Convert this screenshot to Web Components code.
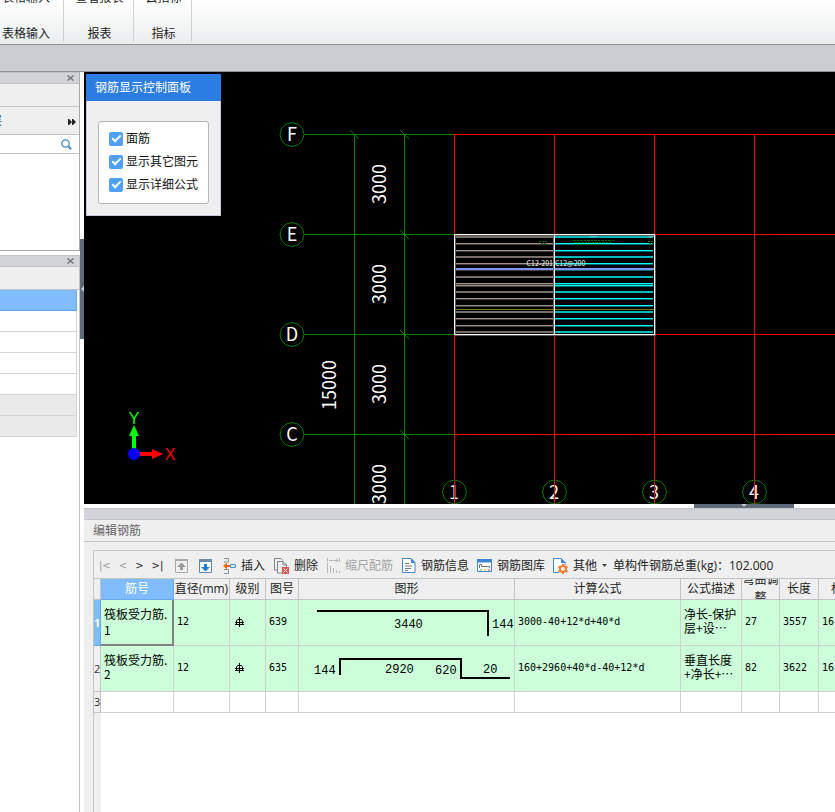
<!DOCTYPE html>
<html lang="zh-CN">
<head>
<meta charset="utf-8">
<title>编辑钢筋</title>
<style>
html,body{height:100%}
body{margin:0;background:#fff;overflow:hidden;color:#1e1e1e;font:12px/16px "Open Sans","Noto Sans CJK SC",sans-serif}
</style>
</head>
<body>
<rebar-app></rebar-app>
<script>
const define=(name,html,after)=>{
  const t=document.createElement('template');
  t.innerHTML=html;
  customElements.define(name,class extends HTMLElement{
    constructor(){super();this.attachShadow({mode:'open'}).append(t.content.cloneNode(true));}
    connectedCallback(){if(after)after(this,this.shadowRoot);}
  });
};
const reset=`:host,*{box-sizing:border-box}button{all:unset;box-sizing:border-box;cursor:default;white-space:nowrap}`;

define('ribbon-group',`<style>${reset}
:host{display:flex;justify-content:center;padding-left:2px;border-right:1px solid #cdcfd1;height:42px;white-space:nowrap;overflow:hidden}
div{display:flex;flex-direction:column;align-items:center;justify-content:flex-end;gap:20px}
button{height:16px}
</style><div><button><slot name="top"></slot></button><button><slot></slot></button></div>`);

define('ribbon-bar',`<style>${reset}
:host{display:block}
nav{display:flex;height:45px;background:linear-gradient(#fff,#eaedee);border-bottom:1px solid #8c9196}
ribbon-group:first-child{width:64px;justify-content:flex-end;padding-right:13px}
ribbon-group:nth-child(2){width:70px}
ribbon-group:nth-child(3){width:58px}
.band{height:27px;background:#c9ccd1;border-bottom:1px solid #8c9196}
</style><nav>
<ribbon-group><span slot="top">表格输入</span>表格输入</ribbon-group>
<ribbon-group><span slot="top">查看报表</span>报表</ribbon-group>
<ribbon-group><span slot="top">云指标</span>指标</ribbon-group>
</nav><div class="band"></div>`);

define('dock-title',`<style>${reset}
:host{display:flex;justify-content:flex-end;align-items:center;height:12px;padding-right:5px;background:#d3d4d9;border:solid #c2c3c7;border-width:1px 0}
button{width:7px;height:10px;display:flex;align-items:center}
</style><button aria-label="关闭"><svg width="7" height="6" viewBox="0 0 7 6" stroke="#777" stroke-width="1.5"><path d="M.5.5l6 5M6.5.5l-6 5"/></svg></button>`);

define('component-list',`<style>${reset}
:host{display:flex;flex-direction:column;height:179px;border:solid #aaa;border-width:0 1px 1px 0}
.tabs{height:23px;background:#efefef;border-bottom:1px solid #c2c3c7}
.tools{height:28px;display:flex;align-items:center;justify-content:space-between;background:#efefef;border-bottom:1px solid #c2c3c7;padding-right:3px}
.tools .cut{width:2px;overflow:hidden;direction:rtl;color:#245}
.search{display:flex;align-items:center;height:19px;border-bottom:1px solid #c2c3c7;padding-right:7px}
input{flex:1;min-width:0;border:0;outline:0;padding:0;background:none}
</style><dock-title></dock-title><div class="tabs"></div>
<div class="tools"><button class="cut">复制到其它楼层</button><button aria-label="更多"><svg width="8" height="6" viewBox="0 0 8 6" fill="#222"><path d="M0 0h1l3 3-3 3H0zM4 0h1l3 3-3 3H4z"/></svg></button></div>
<div class="search"><input aria-label="搜索构件"><svg width="11" height="11" viewBox="0 0 11 11" fill="none" stroke="#3b93c9"><circle cx="4.5" cy="4.5" r="3.7" stroke-width="1.3"/><path d="M7.2 7.2l3 3" stroke-width="2"/></svg></div>`);

define('property-list',`<style>${reset}
:host{display:flex;flex-direction:column;flex:1;border-right:1px solid #c2c3c7}
.tabs{height:23px;background:#efefef;border-bottom:1px solid #c2c3c7}
ul{margin:0 2px 0 0;padding:0;list-style:none}
li{height:21px;border:solid #d4d4d4;border-width:0 1px 1px 0}
.sel{background:#80bbfb;border-color:#66a8ee}
.off{background:#eaeaea}
</style><dock-title></dock-title><div class="tabs"></div>
<ul><li class="sel"></li><li></li><li></li><li></li><li></li><li class="off"></li><li class="off"></li></ul>`);

define('check-row',`<style>
:host{display:block}
label{display:flex;align-items:center;gap:3px;height:23px;color:#111}
input{appearance:none;margin:0;width:14px;height:14px;border-radius:2px;background:#50a0f8;display:grid;place-items:center}
input:checked::before{content:"";width:9px;height:5px;box-sizing:border-box;border:solid #fff;border-width:0 0 2px 2px;transform:translateY(-1px) rotate(-45deg)}
</style><label><input type="checkbox" checked><span><slot></slot></span></label>`);

define('display-panel',`<style>${reset}
:host{display:block;width:135px;background:#efefef;border:1px solid #c5cad6;border-top:0}
h2{margin:0 -1px;height:27px;padding:5px 9px;background:#2b7de1;color:#fff;font:inherit;line-height:17px}
.box{margin:20px 11px 11px;padding:5px 10px 7px;border:1px solid #b4b4b4;border-radius:3px;background:#fff}
</style><h2>钢筋显示控制面板</h2><div class="box"><check-row>面筋</check-row><check-row>显示其它图元</check-row><check-row>显示详细公式</check-row></div>`);

define('plan-view',`<style>
:host{display:block;position:relative;background:#000;overflow:hidden}
svg{display:block;width:100%;height:100%}
display-panel{position:absolute;left:2px;top:2px}
text{font-family:"Noto Sans CJK SC","Noto Sans",sans-serif;font-size:18px;fill:#fff;text-anchor:middle}
.axis{font-size:16px;font-family:"Liberation Sans",sans-serif}
.tag{font-size:7px}
.green{stroke:#008000;fill:none}
.red{stroke:#f00;fill:none}
</style><svg><g transform="translate(-84,-72)"></g></svg><display-panel></display-panel>`,(host,root)=>{
  let s='';
  const ring=(x,y)=>{let p='';for(let i=0;i<12;i++){const a=i*Math.PI/6;p+=(x+12*Math.cos(a)).toFixed(1)+','+(y+12*Math.sin(a)).toFixed(1)+' ';}return `<polygon class="green" points="${p}"/>`;};
  s+='<g class="green"><path d="M354.5 134V504M404.5 134V504"/>';
  for(const y of [134,234,334,434]){
    s+=`<path d="M304 ${y+.5}H454M400 ${y-4}l9 9"/>`;
  }
  s+='<path d="M350 130l9 9"/></g>';
  s+='<g class="red"><path d="M454 134.5H2000M654 234.5H2000M654 334.5H2000M454 434.5H2000"/><path d="M454.5 134V504M554.5 134V504M654.5 134V504M754.5 134V504"/></g>';
  // slab reinforcement bars: left span, then right span
  s+='<rect x="455" y="235" width="199" height="99" fill="#000"/>';
  const bars=[[236,2],[243,1],[250,1],[256,2],[263,1],[269,1],[276,2],[283,1],[285,1],[291,2],[298,1],[305,1],[311,2],[318,1],[325,1],[331,2]];
  for(const [y,h] of bars){
    const w=h>1;
    s+=`<rect x="456" y="${y}" width="98" height="${h}" fill="${w?'#786e68':'#a0928a'}"/>`;
    s+=`<rect x="555" y="${y}" width="98" height="${h}" fill="${w?'#00b9bb':'#00ffff'}"/>`;
    if(!w)s+=`<rect x="456" y="${y+1}" width="98" height="1" fill="#443d3a"/><rect x="555" y="${y+1}" width="98" height="1" fill="#006c6c"/>`;
  }
  s+='<path d="M455 269H654" stroke="#7f92ff" stroke-width="2"/><path d="M455 309.5H654" stroke="#77770f"/>';
  s+='<g stroke="#0a640a" stroke-width="1"><path d="M539 241.5h9M541 243.5h6M648 241.5h7M649 243.5h5" stroke-dasharray="2 1"/><path d="M573 240.5h41M574 242.5h39M574 244.5h30" stroke-dasharray="3 1 2 1"/></g>';
  s+='<path d="M590 236h7M648 236h6" stroke="#ccc"/>';
  s+='<rect x="455.5" y="235.5" width="200" height="100" fill="none" stroke="#555"/><path d="M553.5 235V334" stroke="#666"/>';
  s+='<rect x="454.5" y="234.5" width="200" height="100" fill="none" stroke="#fff"/><path d="M554.5 235V334" stroke="#fff"/>';
  s+='<text class="tag" x="556" y="266">C12-201:C12@200</text>';
  [['F',134],['E',234],['D',334],['C',434]].forEach(([c,y])=>{s+=ring(292,y+.5)+`<text x="292" y="${y+7}">${c}</text>`;});
  [184,284,384,484].forEach(y=>{s+=`<text transform="translate(386,${y}) rotate(-90)">3000</text>`;});
  s+='<text transform="translate(336,385) rotate(-90)">15000</text>';
  [454,554,654,754].forEach((x,i)=>{s+=ring(x+.5,492)+`<text x="${x}" y="499">${i+1}</text><path class="red" d="M${x+.5} 480V504"/>`;});
  s+='<path d="M134 454V436" stroke="#0f0" stroke-width="4"/><path d="M134 425l5 11h-10z" fill="#0f0"/><text class="axis" x="134" y="424" style="fill:#0f0">Y</text>';
  s+='<path d="M134 454H153" stroke="#f00" stroke-width="4"/><path d="M163 454l-11-5v10z" fill="#f00"/><text class="axis" x="170" y="460" style="fill:#f00">X</text><circle cx="134" cy="454" r="6" fill="#00f"/>';
  root.querySelector('g').innerHTML=s;
});

define('tool-button',`<style>${reset}
:host{display:flex}
button{display:flex;align-items:center;gap:5px;height:18px;color:#222}
:host([off]) button{color:#a6a6a6}
</style><button><slot name="icon"></slot><slot></slot></button>`);

define('rebar-toolbar',`<style>${reset}
:host{display:flex;align-items:center;flex:none;height:28px;padding:2px 0 0 5px;border-bottom:1px solid #c2c3c7;background:#efefef;white-space:nowrap}
.nav{display:flex;gap:8px;width:76px;font-family:"DejaVu Sans",sans-serif;font-size:10px;color:#222}
.nav button:nth-child(-n+2){color:#999}
.a{margin-right:9px}.b{margin-right:11px}.c{margin-right:8px}
svg{display:block}
output{margin-left:6px;color:#222}
</style>
<div class="nav"><button aria-label="首条">|&lt;</button><button aria-label="上一条">&lt;</button><button aria-label="下一条">&gt;</button><button aria-label="末条">&gt;|</button></div>
<tool-button off class="b"><svg slot="icon" width="13" height="14" viewBox="0 0 13 14"><path d="M.5.5h12v13H.5z" fill="none" stroke="#aaa"/><path d="M0 0h13v2H0z" fill="#aaa"/><path d="M6.500 3.500l4.500 4.500H8v3H5V8H2z" fill="#999"/></svg></tool-button>
<tool-button class="b"><svg slot="icon" width="13" height="14" viewBox="0 0 13 14"><path d="M.5.5h12v13H.5z" fill="#fff" stroke="#5b85a8"/><path d="M0 0h13v3H0z" fill="#6b8da8"/><path d="M6.500 12.500l4.500-4.500H8V5H5v3H2z" fill="#1f7fd6"/></svg></tool-button>
<tool-button class="a"><svg slot="icon" width="13" height="16" viewBox="0 0 13 16" fill="none"><path d="M1 .5h4.500v3.500H1M1 11.500h4.500v4H1" stroke="#8a9299"/><path d="M0 8l4-3.500V7h3v2H4v2.500z" fill="#ea6a12"/><path d="M7.500 6.500h5v3h-5z" stroke="#4a90d9" fill="#dcecfb"/></svg>插入</tool-button>
<tool-button class="a"><svg slot="icon" width="15" height="16" viewBox="0 0 15 16" fill="none"><path d="M3 12H.5V.5H7l2 2" stroke="#7d858c"/><path d="M8 15H3.500V3.500H9L12.500 7v2" stroke="#7d858c"/><path d="M9 3.500V7h3.500" stroke="#7d858c"/><path d="M8 9h7v7H8z" fill="#d9534a"/><path d="M9.500 10.500l4 4m0-4l-4 4" stroke="#fff"/></svg>删除</tool-button>
<tool-button off class="a"><svg slot="icon" width="13" height="16" viewBox="0 0 13 16" stroke="#b5b5b5" fill="none"><path d="M.5 0v4M12.500 0v4M2 2.500h9M9 .5l2 2-2 2M.5 5v10M3.500 8v7M6.500 10v5M9.500 12v3M12.500 13v2"/></svg>缩尺配筋</tool-button>
<tool-button class="c"><svg slot="icon" width="14" height="15" viewBox="0 0 14 15" fill="none"><path d="M.5.5h8.500l4 4v10H.5z" fill="#fff" stroke="#3f86d8"/><path d="M9 0v5h4.500z" fill="#3f86d8"/><path d="M3 5.500h4M3 8h7M3 10.500h6M3 12.500h3" stroke="#6d7880"/></svg>钢筋信息</tool-button>
<tool-button class="c"><svg slot="icon" width="15" height="13" viewBox="0 0 15 13" fill="none"><path d="M.5.5h14v12H.5z" fill="#fff" stroke="#3f86d8"/><path d="M0 0h15v3.500H0z" fill="#3f86d8"/><path d="M2.500 9V5.500h2v2h8V9" stroke="#6d7880"/><path d="M3 11h2" stroke="#4b4"/><path d="M7 11h2" stroke="#e90"/><path d="M11 11h2" stroke="#e33"/></svg>钢筋图库</tool-button>
<tool-button><svg slot="icon" width="15" height="16" viewBox="0 0 15 16" fill="none"><path d="M6 14.500H.5V.5H8l4 4V7" fill="#fff" stroke="#3f86d8"/><path d="M8 0v5h4.500z" fill="#3f86d8"/><circle cx="10" cy="11" r="3" stroke="#f08030" stroke-width="2"/><path d="M10 6v2M10 14v2M5.500 8.500l2 1M12.500 12.500l2 1M5.500 13.500l2-1M12.500 9.500l2-1" stroke="#f08030" stroke-width="2"/></svg>其他<svg width="5" height="3" viewBox="0 0 5 3" fill="#444"><path d="M0 0h5L2.500 3z"/></svg></tool-button>
<output>单构件钢筋总重(kg)：102.000</output>`);

const grade='<svg width="15" height="12" viewBox="0 0 15 12" fill="none" stroke="#000" role="img" aria-label="三级钢"><path d="M6.500 1v10M3.500 8V5l1-1.500h4l1 1.500v3M2 6.500h9M2 8.500h9"/></svg>';
define('rebar-table',`<style>${reset}
:host{display:flex;flex:1;overflow:hidden;background:linear-gradient(90deg,#efefef 7px,#fff 7px)}
table{width:774px;flex:none;border-collapse:separate;border-spacing:0;table-layout:fixed;align-self:flex-start;font:10px/14px "DejaVu Sans Mono","Noto Sans CJK SC",monospace;color:#000}
th,td{padding:0;border:solid #d0d0d0;border-width:0 1px 1px 0;overflow:hidden}
thead th{height:21px;background:#efefef;border-color:#c2c3c7;font:12px/16px "Open Sans","Noto Sans CJK SC",sans-serif;color:#222;text-align:center}
thead div{height:20px;display:flex;align-items:center;justify-content:center;white-space:nowrap;overflow:hidden}
thead .wrap{white-space:normal;line-height:18px}
thead .sel,tbody .sel{background:#80bbfb;color:#fff;border-color:#66a8ee}
tbody th{background:#efefef;border-color:#c2c3c7;font:11px/16px "Open Sans",sans-serif;color:#333}
tbody th.sel{font-weight:700}
.r{height:46px}.r td{background:#ccffd9;padding:0 3px 2px}
.r td.name,.r td.desc{font-size:12px;font-family:"Noto Sans CJK SC",sans-serif;line-height:14px;padding:0 2px 3px 3px;word-break:break-all}
.r td.name{padding-right:0}
.r td.cur{border:solid #808080;border-width:0 2px 2px 0;line-height:16px;padding-bottom:0}
.r td.fig{padding:0}
.e{height:21px}
svg{display:block}
.fig text{font:12px "Liberation Mono",monospace}
</style><table><colgroup><col style="width:7px"><col style="width:73px"><col style="width:56px"><col style="width:36px"><col style="width:33px"><col style="width:216px"><col style="width:166px"><col style="width:61px"><col style="width:38px"><col style="width:39px"><col style="width:49px"></colgroup>
<thead><tr><th></th><th class="sel"><div>筋号</div></th><th><div>直径(mm)</div></th><th><div>级别</div></th><th><div>图号</div></th><th><div>图形</div></th><th><div>计算公式</div></th><th><div>公式描述</div></th><th><div class="wrap">弯曲调整</div></th><th><div>长度</div></th><th><div>根数</div></th></tr></thead>
<tbody>
<tr class="r"><th class="sel">1</th><td class="name cur">筏板受力筋.1</td><td>12</td><td>${grade}</td><td>639</td>
<td class="fig"><svg width="215" height="45"><path d="M18 11H189V36" fill="none" stroke="#000" stroke-width="2"/><text x="95" y="28">3440</text><text x="193" y="28">144</text></svg></td>
<td>3000-40+12*d+40*d</td><td class="desc">净长-保护层+设⋯</td><td>27</td><td>3557</td><td>16</td></tr>
<tr class="r"><th>2</th><td class="name">筏板受力筋.2</td><td>12</td><td>${grade}</td><td>635</td>
<td class="fig"><svg width="215" height="45"><path d="M41 29V13H162V32H211" fill="none" stroke="#000" stroke-width="2"/><text x="15" y="28">144</text><text x="86" y="27">2920</text><text x="136" y="28">620</text><text x="184" y="27">20</text></svg></td>
<td>160+2960+40*d-40+12*d</td><td class="desc">垂直长度+净长+⋯</td><td>82</td><td>3622</td><td>16</td></tr>
<tr class="e"><th>3</th><td></td><td></td><td></td><td></td><td></td><td></td><td></td><td></td><td></td><td></td></tr>
</tbody></table>`);

define('rebar-editor',`<style>${reset}
:host{display:flex;flex-direction:column;min-width:0;min-height:0;background:#efefef}
.strip{height:12px;flex:none;background:#d3d4d9;border:solid #c2c3c7;border-width:1px 0}
h2{margin:0;flex:none;height:22px;padding:2px 9px;font:inherit;line-height:17px;color:#666;border-bottom:1px solid #c2c3c7}
.body{flex:1;min-height:0;display:flex;flex-direction:column;margin:8px 0 0 9px;border:solid #c2c3c7;border-width:1px 0 0 1px;overflow:hidden}
</style><div class="strip"></div><h2>编辑钢筋</h2><div class="body"><rebar-toolbar></rebar-toolbar><rebar-table></rebar-table></div>`);

define('rebar-app',`<style>${reset}
:host{display:flex;flex-direction:column;height:100vh}
main{flex:1;min-height:0;display:grid;grid-template-columns:80px 4px minmax(0,1fr)}
aside{display:flex;flex-direction:column;gap:4px}
.vgap{display:flex;flex-direction:column;padding-top:167px}
.vgap button{width:4px;height:100px;background:#5f6b78;display:grid;place-items:center}
.right{display:grid;grid-template-columns:minmax(0,1fr);grid-template-rows:minmax(0,432fr) 4px minmax(0,304fr);min-width:0;min-height:0}
.hgap{display:flex;justify-content:flex-end;padding-right:41px}
.hgap button{width:100px;height:4px;background:#5f6b78;display:grid;place-items:center}
svg{display:block}
</style><ribbon-bar></ribbon-bar><main>
<aside><component-list></component-list><property-list></property-list></aside>
<div class="vgap"><button aria-label="收起左侧"><svg width="4" height="6" viewBox="0 0 4 6" fill="#c5c9ce"><path d="M4 0v6L1 3z"/></svg></button></div>
<div class="right"><plan-view></plan-view><div class="hgap"><button aria-label="收起下方"><svg width="6" height="4" viewBox="0 0 6 4" fill="#c5c9ce"><path d="M0 0h6L3 3z"/></svg></button></div><rebar-editor></rebar-editor></div>
</main>`);
</script>
</body>
</html>
